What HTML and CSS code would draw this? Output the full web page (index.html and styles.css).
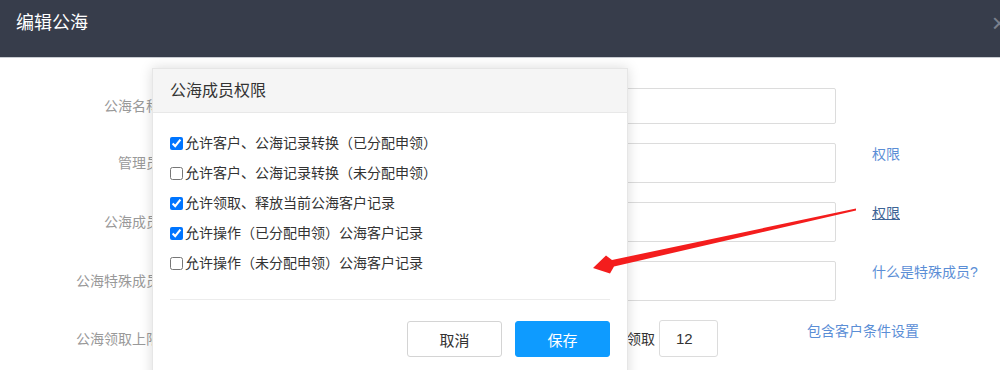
FILE: index.html
```html
<!DOCTYPE html>
<html lang="zh-CN">
<head>
  <meta charset="UTF-8" />
  <meta name="viewport" content="width=device-width, initial-scale=1" />
  <title>编辑公海</title>
  <link rel="stylesheet" href="styles.css">
</head>
<body>
  <div class="dialog">
    <!-- 标题栏 -->
    <div class="dialog-head">
      <span class="dialog-title">编辑公海</span>
      <span class="dialog-close">×</span>
    </div>

    <!-- 表单 -->
    <form class="sea-form">
      <div class="form-row row-first">
        <label class="form-label">公海名称</label>
        <input class="form-input" type="text" />
      </div>
      <div class="form-row">
        <label class="form-label">管理员</label>
        <input class="form-input" type="text" />
        <a class="form-link">权限</a>
      </div>
      <div class="form-row">
        <label class="form-label">公海成员</label>
        <input class="form-input" type="text" />
        <a class="form-link hover">权限</a>
      </div>
      <div class="form-row">
        <label class="form-label">公海特殊成员</label>
        <input class="form-input" type="text" />
        <a class="form-link">什么是特殊成员?</a>
      </div>
      <div class="form-row row-limit">
        <label class="form-label">公海领取上限</label>
        <span class="limit-text">领取</span>
        <input class="limit-input" type="text" value="12" />
        <a class="form-link limit-link">包含客户条件设置</a>
      </div>
    </form>

    <!-- 公海成员权限 弹窗 -->
    <div class="perm-pop">
      <div class="perm-head">公海成员权限</div>
      <div class="perm-body">
        <label class="perm-item"><input type="checkbox" checked />允许客户、公海记录转换（已分配申领）</label>
        <label class="perm-item"><input type="checkbox" />允许客户、公海记录转换（未分配申领）</label>
        <label class="perm-item"><input type="checkbox" checked />允许领取、释放当前公海客户记录</label>
        <label class="perm-item"><input type="checkbox" checked />允许操作（已分配申领）公海客户记录</label>
        <label class="perm-item"><input type="checkbox" />允许操作（未分配申领）公海客户记录</label>
      </div>
      <div class="perm-foot">
        <button class="btn btn-cancel" type="button">取消</button>
        <button class="btn btn-save" type="button">保存</button>
      </div>
    </div>

    <!-- 标注箭头 -->
    <svg class="mark-arrow" width="1000" height="370" viewBox="0 0 1000 370">
      <polygon points="856,208.5 612,260 606,255.5 593,268 610,273.5 614,266.5 856,210.5" fill="#f41d1d" />
    </svg>
  </div>
</body>
</html>
```

FILE: styles.css
```css
* {
  box-sizing: border-box;
}

body {
  margin: 0;
  width: 1000px;
  height: 370px;
  overflow: hidden;
  background: #fff;
  font-family: "Liberation Sans", "Noto Sans CJK SC", sans-serif;
  font-size: 14px;
  color: #333;
}

.dialog {
  position: relative;
  width: 1000px;
  height: 370px;
  overflow: hidden;
}

.dialog-head {
  height: 58px;
  background: #373d4b;
  border-bottom: 1px solid #c9ccd2;
  display: flex;
  justify-content: space-between;
  align-items: flex-start;
  padding: 11px 0 0 16px;
}

.dialog-title {
  font-size: 18px;
  line-height: 24px;
  color: #fff;
}

.dialog-close {
  font-size: 26px;
  line-height: 24px;
  color: #7a808c;
  margin-right: -7px;
}

/* 表单 */
.sea-form {
  padding-top: 30px;
}

.form-row {
  display: flex;
  align-items: flex-start;
  height: 40px;
  margin-bottom: 19px;
}

.row-first {
  height: 36px;
}

.form-label {
  width: 160px;
  margin-right: 16px;
  text-align: right;
  color: #999;
  align-self: center;
  line-height: 20px;
}

.form-input {
  width: 660px;
  height: 100%;
  border: 1px solid #dcdcdc;
  border-radius: 2px;
  outline: none;
}

.form-link {
  margin-left: 36px;
  margin-top: 1px;
  line-height: 20px;
  color: #5b8ed6;
  cursor: pointer;
}

.form-link.hover {
  color: #3d6496;
  text-decoration: underline;
}

.row-limit {
  height: 37px;
}

.limit-text {
  width: 479px;
  text-align: right;
  align-self: center;
  line-height: 20px;
  color: #333;
}

.limit-input {
  width: 59px;
  height: 37px;
  margin-left: 4px;
  padding-left: 16px;
  border: 1px solid #dcdcdc;
  border-radius: 3px;
  font-family: "Liberation Sans", sans-serif;
  font-size: 15px;
  color: #333;
}

.limit-link {
  margin-left: 89px;
}

/* 弹窗 */
.perm-pop {
  position: absolute;
  left: 152px;
  top: 68px;
  width: 476px;
  height: 320px;
  background: #fff;
  border: 1px solid #e6e6e6;
  box-shadow: 0 0 12px rgba(0, 0, 0, 0.15);
}

.perm-head {
  height: 44px;
  background: #f5f5f5;
  border-bottom: 1px solid #e8e8e8;
  padding-left: 17px;
  font-size: 16px;
  line-height: 43px;
  color: #333;
}

.perm-body {
  margin: 0 17px;
  padding: 15px 0 21px;
  border-bottom: 1px solid #ececec;
}

.perm-item {
  display: flex;
  align-items: center;
  height: 30px;
  line-height: 30px;
  color: #333;
}

.perm-item input {
  width: 13px;
  height: 13px;
  margin: 0 2px 0 0;
}

.perm-foot {
  display: flex;
  justify-content: flex-end;
  gap: 13px;
  padding: 21px 17px 0;
}

.btn {
  width: 95px;
  height: 36px;
  border-radius: 3px;
  font-family: "Liberation Sans", "Noto Sans CJK SC", sans-serif;
  font-size: 15px;
  cursor: pointer;
}

.btn-cancel {
  background: #fff;
  border: 1px solid #d4d4d4;
  color: #333;
}

.btn-save {
  background: #0e9bff;
  border: 1px solid #0e9bff;
  color: #fff;
}

/* 箭头 */
.mark-arrow {
  position: absolute;
  left: 0;
  top: 0;
  pointer-events: none;
}
```
